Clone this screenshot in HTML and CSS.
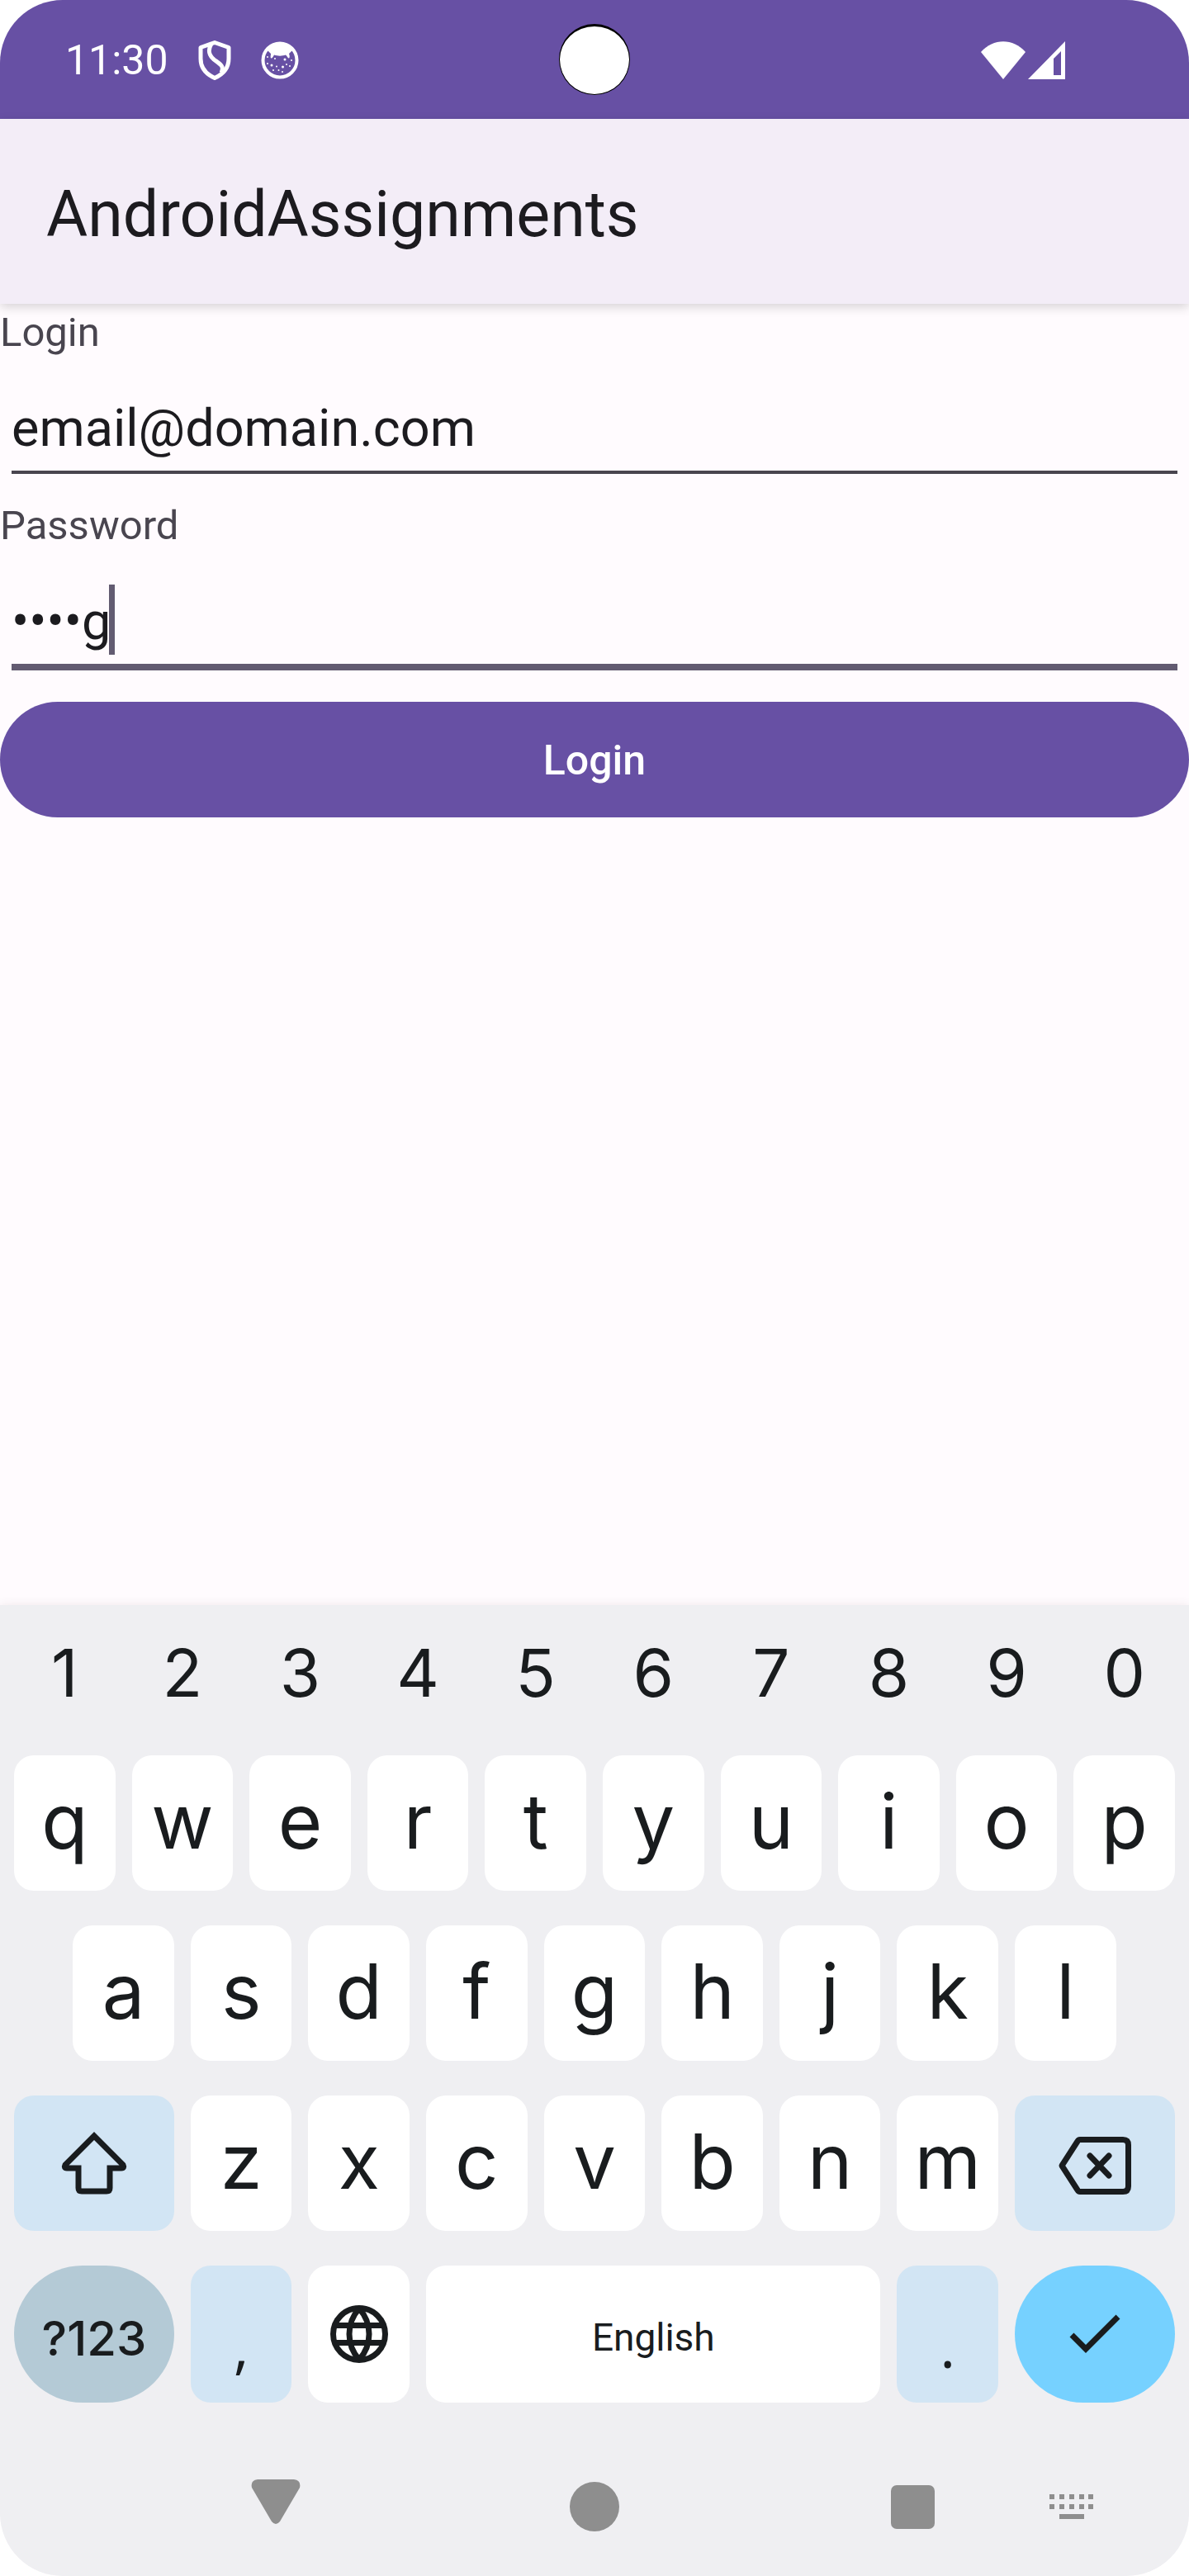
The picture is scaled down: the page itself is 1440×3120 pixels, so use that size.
FILE: index.html
```html
<!DOCTYPE html>
<html lang="en">
<head>
<meta charset="utf-8">
<meta name="viewport" content="width=device-width, initial-scale=1">
<title>AndroidAssignments</title>
<link rel="stylesheet" href="styles.css">
</head>
<body>
<div class="screen">
  <div class="status-bar">
    <div class="status-group">
      <span class="clock">11:30</span>
      <svg class="status-icon" width="40" height="48" viewBox="0 0 40 48" fill="none" stroke="#fff" stroke-width="5" stroke-linejoin="round" aria-hidden="true">
        <path d="M20 2.500 37 8.500V22C37 33 30 41 20 45.500 10 41 3 33 3 22V8.500Z"/>
        <path d="M16 4C12 11 12 17 19 23 27 29 32 31 28 39"/>
      </svg>
      <svg class="status-icon" width="46" height="46" viewBox="0 0 46 46" fill="#fff" aria-hidden="true">
        <circle cx="23" cy="23" r="20.500" fill="none" stroke="#fff" stroke-width="4"/>
        <path d="M7 10C12 1 34 1 39 10L34 15C35 17 35 20 34 20.500 32.500 21 32 18 30 16.500 26 18 20 18 16 16.500 15 18 14 21 12.500 20.500 11 20 12 17 12 15Z"/>
        <circle cx="13" cy="29" r="1.500"/><circle cx="26.500" cy="31" r="1.500"/><circle cx="29" cy="22" r="1.500"/><circle cx="17" cy="21" r="1"/><circle cx="19" cy="30.500" r="1"/><circle cx="15" cy="35" r="1"/><circle cx="21.500" cy="35" r="1"/><circle cx="26" cy="37" r="1"/><circle cx="31" cy="28" r="1"/><circle cx="8" cy="19" r="1"/><circle cx="8" cy="27" r="1"/><circle cx="35" cy="30" r="1"/><circle cx="37" cy="23" r="1"/>
      </svg>
    </div>
    <span class="camera"></span>
    <div class="status-group status-right">
      <svg width="54" height="46" viewBox="0 0 54 46" fill="#fff" aria-hidden="true"><path d="M27 46 0 13C15-4 39-4 54 13Z"/></svg>
      <svg width="45" height="46" viewBox="0 0 45 46" fill="#fff" fill-rule="evenodd" aria-hidden="true"><path d="M0 46 45 0V46ZM31 21V41H40V12Z"/></svg>
    </div>
  </div>
  <header class="app-bar"><h1 class="app-title">AndroidAssignments</h1></header>
  <main class="content">
    <form class="login-form">
      <label class="label" for="login">Login</label>
      <div class="field"><input class="input" id="login" type="text" value="email@domain.com"></div>
      <label class="label" for="password">Password</label>
      <div class="field field-active"><input class="input" id="password" type="text" autocomplete="off" value="••••g"><span class="caret"></span></div>
      <button class="submit" type="button">Login</button>
    </form>
  </main>
  <section class="keyboard" aria-label="Keyboard">
    <div class="number-row">
      <button class="digit" type="button">1</button><button class="digit" type="button">2</button><button class="digit" type="button">3</button><button class="digit" type="button">4</button><button class="digit" type="button">5</button><button class="digit" type="button">6</button><button class="digit" type="button">7</button><button class="digit" type="button">8</button><button class="digit" type="button">9</button><button class="digit" type="button">0</button>
    </div>
    <div class="keys">
      <button class="key" type="button">q</button><button class="key" type="button">w</button><button class="key" type="button">e</button><button class="key" type="button">r</button><button class="key" type="button">t</button><button class="key" type="button">y</button><button class="key" type="button">u</button><button class="key" type="button">i</button><button class="key" type="button">o</button><button class="key" type="button">p</button>
      <button class="key key-inset" type="button">a</button><button class="key" type="button">s</button><button class="key" type="button">d</button><button class="key" type="button">f</button><button class="key" type="button">g</button><button class="key" type="button">h</button><button class="key" type="button">j</button><button class="key" type="button">k</button><button class="key" type="button">l</button>
      <button class="key key-wide key-tint" type="button" aria-label="Shift">
        <svg width="80" height="76" viewBox="0 0 80 76" fill="none" stroke="#191c1e" stroke-width="7" aria-hidden="true"><path d="M40 5 5 40Q3 44 7 44H21V68Q21 72 25 72H55Q59 72 59 68V44H73Q77 44 75 40Z"/></svg>
      </button>
      <button class="key" type="button">z</button><button class="key" type="button">x</button><button class="key" type="button">c</button><button class="key" type="button">v</button><button class="key" type="button">b</button><button class="key" type="button">n</button><button class="key" type="button">m</button>
      <button class="key key-wide key-tint key-delete" type="button" aria-label="Backspace">
        <svg width="88" height="70" viewBox="0 0 88 70" fill="none" stroke="#191c1e" stroke-width="7" aria-hidden="true"><path stroke-linejoin="round" d="M26 3.500H78Q84.500 3.500 84.500 10V60Q84.500 66.500 78 66.500H26Q24 66.500 23 64.500L4 35 23 5.500Q24 3.500 26 3.500Z"/><path stroke-linecap="round" d="M38 23 61 47M61 23 38 47"/></svg>
      </button>
      <button class="key key-wide key-symbols" type="button">?123</button>
      <button class="key key-tint key-mark" type="button">,</button>
      <button class="key key-icon" type="button" aria-label="Change language">
        <svg width="70" height="70" viewBox="0 0 70 70" fill="none" stroke="#191c1e" stroke-width="7" aria-hidden="true"><circle cx="35" cy="35" r="31.500"/><path d="M5 24.500H65M5 45.500H65M35 4C19 22 19 48 35 66M35 4C51 22 51 48 35 66"/></svg>
      </button>
      <button class="key key-space" type="button">English</button>
      <button class="key key-tint key-mark" type="button">.</button>
      <button class="key key-wide key-enter" type="button" aria-label="Done">
        <svg width="62" height="48" viewBox="0 0 62 48" fill="none" stroke="#191c1e" stroke-width="7" aria-hidden="true"><path d="M3 25 20 42 59 3"/></svg>
      </button>
    </div>
  </section>
  <nav class="nav-bar" aria-label="System">
    <div class="nav-main">
      <button class="nav-button" type="button" aria-label="Back"><svg width="60" height="60" viewBox="0 0 60 60" fill="#8e8e8e" aria-hidden="true"><path d="M8-3H52Q61-2 59 7L35 48Q30 54 25 48L1 7Q-1-2 8-3Z"/></svg></button>
      <button class="nav-button" type="button" aria-label="Home"><svg width="60" height="60" viewBox="0 0 60 60" fill="#8e8e8e" aria-hidden="true"><circle cx="30" cy="30" r="30"/></svg></button>
      <button class="nav-button" type="button" aria-label="Recent apps"><svg width="60" height="60" viewBox="0 0 60 60" fill="#8e8e8e" aria-hidden="true"><rect x="3" y="4" width="53" height="53" rx="7"/></svg></button>
    </div>
    <button class="nav-button" type="button" aria-label="Switch keyboard"><svg width="60" height="60" viewBox="0 0 60 60" fill="#8e8e8e" aria-hidden="true"><path d="M3 15h6v6h-6zM15 15h6v6h-6zM27 15h6v6h-6zM39 15h6v6h-6zM50 15h6v6h-6zM3 27h6v6h-6zM15 27h6v6h-6zM27 27h6v6h-6zM39 27h6v6h-6zM50 27h6v6h-6zM15 39h30v6h-30z"/></svg></button>
  </nav>
</div>
</body>
</html>
```
FILE: styles.css
```css
* { box-sizing: border-box; }
body { margin: 0; background: #fff; font-family: Roboto, "Liberation Sans", sans-serif; color: #1c1b1f; }
button, input { margin: 0; border: 0; padding: 0; font: inherit; color: inherit; background: none; border-radius: 0; outline: 0; }
svg { display: block; overflow: visible; flex: none; }
.screen { display: flex; flex-direction: column; min-height: 100vh; border-radius: 76px; overflow: hidden; background: #fffbfe; }
.status-bar { position: relative; display: flex; align-items: center; justify-content: space-between; height: 144px; padding: 2px 150px 0 79px; background: #6750a4; color: #fff; }
.status-group { display: flex; align-items: center; }
.status-right { gap: 3px; }
.clock { font-size: 50px; line-height: 60px; }
.status-icon { margin-left: 36px; }
.camera { position: absolute; top: 29px; left: 50%; width: 86px; height: 86px; margin-left: -43px; border: 1px solid #000; border-top-width: 3px; border-radius: 50%; background: #fff; }
.app-bar { position: relative; display: flex; align-items: center; height: 224px; padding: 8px 56px 0; background: #f3edf7; box-shadow: 0 4px 12px rgba(0, 0, 0, 0.16); }
.app-title { margin: 0; font-size: 77px; font-weight: 400; line-height: 96px; }
.content { flex: 1; }
.login-form { display: flex; flex-direction: column; }
.label { height: 66px; font-size: 49px; line-height: 70px; color: #49454f; }
.field { position: relative; height: 168px; padding: 0 14px; }
.input { display: block; width: 100%; height: 140px; padding-top: 32px; border-bottom: 4px solid #49454f; font-size: 63px; }
.field-active .input { height: 144px; border-bottom: 8px solid #625b71; }
.caret { position: absolute; left: 132px; top: 40px; width: 7px; height: 85px; background: #625b71; }
.submit { height: 140px; margin-top: 14px; padding-top: 2px; border-radius: 70px; background: #6750a4; color: #fff; font-size: 50px; font-weight: 500; }
.keyboard { padding: 0 17px; background: #efeff2; color: #191c1e; box-shadow: 0 0 12px rgba(60, 0, 30, 0.08); }
.number-row { display: grid; grid-template-columns: repeat(10, 1fr); column-gap: 20px; height: 162px; margin-bottom: 20px; }
.digit { font-family: Inter, sans-serif; font-size: 80px; }
.keys { display: grid; grid-template-columns: repeat(20, minmax(0, 1fr)); grid-template-rows: 164px 164px 164px 166px; gap: 42px 20px; }
.key { display: flex; align-items: center; justify-content: center; grid-column: span 2; padding-bottom: 5px; border-radius: 24px; background: #fff; font-family: Inter, sans-serif; font-size: 92px; white-space: nowrap; }
.key-inset { grid-column: 2 / span 2; }
.key-wide { grid-column: span 3; padding: 0; }
.key-tint { background: #d2e5f4; }
.key-delete { padding-top: 6px; }
.key-icon { padding: 0; }
.key-symbols { padding-top: 10px; border-radius: 83px; background: #b4cad6; font-size: 58px; font-weight: 500; }
.key-mark { padding: 26px 0 0; font-family: "Open Sans", sans-serif; font-size: 72px; }
.key-space { grid-column: span 8; padding: 8px 0 0; font-family: Roboto, sans-serif; font-size: 46px; }
.key-enter { border-radius: 83px; background: #76d1ff; }
.nav-bar { display: flex; align-items: center; gap: 132px; height: 210px; padding: 42px 112px 0 304px; background: #efeff2; }
.nav-main { display: flex; flex: 1; justify-content: space-between; }
.nav-button { width: 60px; height: 60px; }
```
